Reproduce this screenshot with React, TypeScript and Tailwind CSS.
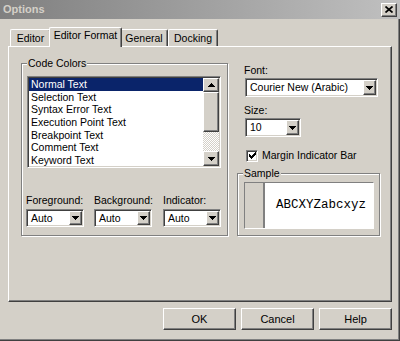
import React from "react";

const FACE = "bg-[#d4d0c8]";
const raised =
  "border border-t-white border-l-white border-r-[#404040] border-b-[#404040] shadow-[inset_-1px_-1px_0_#808080]";
const sunken =
  "border border-t-[#808080] border-l-[#808080] border-r-white border-b-white shadow-[inset_1px_1px_0_#404040,inset_-1px_-1px_0_#d4d0c8]";

function Arrow({ up = false }: { up?: boolean }) {
  return (
    <svg width="7" height="4" viewBox="0 0 7 4" shapeRendering="crispEdges" className={up ? "rotate-180" : ""}>
      <path d="M0 0h7v1H0z M1 1h5v1H1z M2 2h3v1H2z M3 3h1v1H3z" fill="#000" />
    </svg>
  );
}

function Combo({ value, className = "" }: { value: string; className?: string }) {
  return (
    <div className={`flex bg-white p-px ${sunken} ${className}`}>
      <span className="flex-1 truncate pl-[3px] leading-[14px]">{value}</span>
      <span className={`flex w-[13px] items-center justify-center ${FACE} ${raised}`}>
        <Arrow />
      </span>
    </div>
  );
}

function Group({ label, className = "", children }: { label: string; className?: string; children?: React.ReactNode }) {
  return (
    <div className={`relative border border-[#808080] shadow-[inset_1px_1px_0_#fff,1px_1px_0_#fff] ${className}`}>
      <span className="absolute -top-[7px] left-[5px] bg-[#d4d0c8] px-[1px] leading-[13px]">{label}</span>
      {children}
    </div>
  );
}

const tabs = [
  { label: "Editor", w: "w-[41px]" },
  { label: "Editor Format", w: "w-[73px]", active: true },
  { label: "General", w: "w-[48px]" },
  { label: "Docking", w: "w-[50px]" },
];

const codeColors = [
  "Normal Text",
  "Selection Text",
  "Syntax Error Text",
  "Execution Point Text",
  "Breakpoint Text",
  "Comment Text",
  "Keyword Text",
];

export default function App() {
  return (
    <div className="flex h-[341px] w-[400px] flex-col overflow-hidden bg-[#d4d0c8] text-[10.5px] text-black [font-family:'Liberation_Sans',Arial,sans-serif] shadow-[inset_-1px_-1px_0_#404040,inset_-2px_-2px_0_#808080]">
      {/* title bar */}
      <div className="flex h-[19px] items-center justify-between bg-gradient-to-r from-[#808080] to-[#c0c0c0] pl-[3px] pr-[3px]">
        <span className="text-[11px] font-bold text-[#d4d0c8]">Options</span>
        <span className={`flex h-[14px] w-[16px] items-center justify-center ${FACE} ${raised}`}>
          <svg width="8" height="7" viewBox="0 0 8 7">
            <path d="M0.5 0.5 L7.5 6.5 M7.5 0.5 L0.5 6.5" stroke="#000" strokeWidth="1.7" />
          </svg>
        </span>
      </div>

      {/* tabs */}
      <div className="relative z-10 ml-[10px] mt-[8px] flex h-[19px] items-end">
        {tabs.map((t) =>
          t.active ? (
            <div
              key={t.label}
              className={`relative z-10 -mx-[2px] -mb-[1px] flex h-[20px] ${t.w} items-center justify-center rounded-t-[2px] border-l border-r border-t border-l-white border-r-[#404040] border-t-white bg-[#d4d0c8] pb-[3px] shadow-[inset_-1px_0_0_#808080]`}
            >
              {t.label}
            </div>
          ) : (
            <div
              key={t.label}
              className={`flex h-[17px] ${t.w} items-center justify-center rounded-t-[2px] border-l border-r border-t border-l-white border-r-[#404040] border-t-white pt-[1px] shadow-[inset_-1px_0_0_#808080]`}
            >
              {t.label}
            </div>
          )
        )}
      </div>

      {/* tab panel */}
      <div className={`ml-[8px] flex h-[256px] w-[384px] pl-[12px] pt-[16px] ${raised}`}>
        <Group label="Code Colors" className="h-[173px] w-[207px]">
          <div className={`ml-[5px] mt-[12px] flex h-[92px] w-[194px] bg-white p-px ${sunken}`}>
            <div className="flex-1 overflow-hidden">
              {codeColors.map((c, i) => (
                <div
                  key={c}
                  className={`h-[12.7px] pl-[2px] leading-[12.7px] ${i === 0 ? "bg-[#0a246a] text-white" : ""}`}
                >
                  {c}
                </div>
              ))}
            </div>
            <div className="flex w-[16px] flex-col">
              <span className={`flex h-[14px] items-center justify-center ${FACE} ${raised}`}>
                <Arrow up />
              </span>
              <span className={`h-[40px] ${FACE} ${raised}`} />
              <span className="flex-1 bg-[repeating-conic-gradient(#ffffff_0_25%,#d4d0c8_0_50%)] bg-[length:2px_2px]" />
              <span className={`flex h-[15px] items-center justify-center ${FACE} ${raised}`}>
                <Arrow />
              </span>
            </div>
          </div>

          <div className="ml-[4px] mt-[26px] flex gap-[10px]">
            <div className="flex flex-col gap-[2px]">
              <span className="leading-[13px]">Foreground:</span>
              <Combo value="Auto" className="h-[18px] w-[58px]" />
            </div>
            <div className="flex flex-col gap-[2px]">
              <span className="leading-[13px]">Background:</span>
              <Combo value="Auto" className="h-[18px] w-[58px]" />
            </div>
            <div className="flex flex-col gap-[2px]">
              <span className="leading-[13px]">Indicator:</span>
              <Combo value="Auto" className="h-[18px] w-[58px]" />
            </div>
          </div>
        </Group>

        <div className="ml-[9px] flex w-[143px] flex-col pt-[1px]">
          <span className="pl-[7px] leading-[13px]">Font:</span>
          <Combo value="Courier New (Arabic)" className="ml-[8px] mt-[1px] h-[19px] w-[133px]" />
          <span className="mt-[7px] pl-[7px] leading-[13px]">Size:</span>
          <Combo value="10" className="ml-[8px] mt-[1px] h-[19px] w-[56px]" />
          <div className="ml-[9px] mt-[12px] flex items-center gap-[4px]">
            <span className={`flex h-[12px] w-[12px] items-center justify-center bg-white ${sunken}`}>
              <svg width="7" height="7" viewBox="0 0 7 7" shapeRendering="crispEdges">
                <path d="M0 2h1v3H0z M1 3h1v3H1z M2 4h1v3H2z M3 3h1v3H3z M4 2h1v3H4z M5 1h1v3H5z M6 0h1v3H6z" fill="#000" />
              </svg>
            </span>
            <span className="leading-[13px]">Margin Indicator Bar</span>
          </div>
          <Group label="Sample" className="mt-[11px] h-[63px] w-[143px]">
            <div className="ml-[6px] mt-[8px] flex h-[47px] w-[130px] border border-b-white border-l-[#808080] border-r-white border-t-[#808080] bg-white">
              <div className="w-[20px] border-r-2 border-r-[#808080] bg-[#d4d0c8]" />
              <div className="flex flex-1 items-center pl-[11px] text-[12.5px] [font-family:'Liberation_Mono','Courier_New',monospace]">
                ABCXYZabcxyz
              </div>
            </div>
          </Group>
        </div>
      </div>

      {/* buttons */}
      <div className="mt-[6px] flex justify-end gap-[5px] pr-[8px] text-[11px]">
        {["OK", "Cancel", "Help"].map((b) => (
          <button key={b} className={`flex h-[22px] w-[73px] items-center justify-center ${FACE} ${raised}`}>
            {b}
          </button>
        ))}
      </div>
    </div>
  );
}
